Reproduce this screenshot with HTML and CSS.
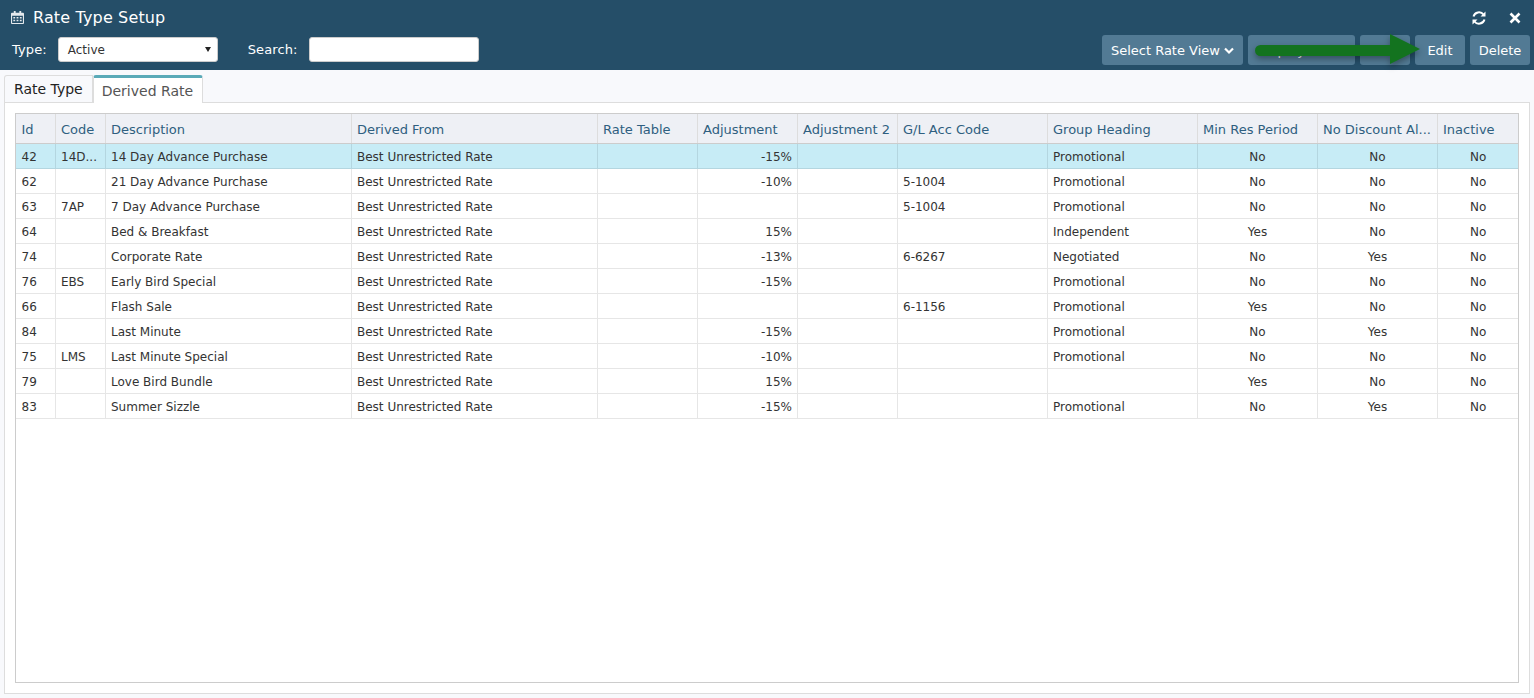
FILE: index.html
```html
<!DOCTYPE html>
<html lang="en">
  <head>
    <meta charset="UTF-8" />
    <title>Rate Type Setup</title>
    <link rel="stylesheet" href="styles.css">
  </head>
  <body>
    <div class="top-bar">
      <div class="title-row">
        <svg class="title-icon" viewBox="0 0 14 14" width="14" height="14">
          <path fill="#e4e9ed" d="M3 0h2v2h4V0h2v2h2a1 1 0 0 1 1 1v10a1 1 0 0 1-1 1H1a1 1 0 0 1-1-1V3a1 1 0 0 1 1-1h2zM1.2 5.2v7.6h11.6V5.2z"/>
          <path fill="#e4e9ed" d="M2.5 6.5h2v1.5h-2zM6 6.5h2v1.5H6zM9.5 6.5h2v1.5h-2zM2.5 9.5h2v1.5h-2zM6 9.5h2v1.5H6zM9.5 9.5h2v1.5h-2z"/>
        </svg>
        <h1 class="title">Rate Type Setup</h1>
        <div class="window-actions">
          <svg viewBox="0 0 16 16" width="16" height="16" fill="none" stroke="#fff" stroke-width="2">
            <path d="M2.5 6.5A5.7 5.7 0 0 1 12.5 4.5"/>
            <path d="M13.5 9.5A5.7 5.7 0 0 1 3.5 11.5"/>
            <path fill="#fff" stroke="none" d="M14.5 1.5v5h-5zM1.5 14.5v-5h5z"/>
          </svg>
          <svg viewBox="0 0 12 12" width="12" height="12" stroke="#fff" stroke-width="2.6">
            <path d="M1.5 1.5l9 9M10.5 1.5l-9 9"/>
          </svg>
        </div>
      </div>
      <div class="filter-row">
        <label class="filter-label">Type:</label>
        <div class="select-box">Active<span class="select-caret"></span></div>
        <label class="filter-label search-label">Search:</label>
        <input class="search-input" type="text" />
        <div class="btn-group">
          <button class="top-btn view-btn">Select Rate View
            <svg viewBox="0 0 10 8" width="10" height="8" fill="none" stroke="#fff" stroke-width="2.2"><path d="M1 1.5l4 4 4-4"/></svg>
          </button>
          <button class="top-btn order-btn">Display Order</button>
          <button class="top-btn add-btn">Add</button>
          <button class="top-btn edit-btn">Edit</button>
          <button class="top-btn delete-btn">Delete</button>
          <!-- Arrow pointing at the Edit button -->
          <svg class="arrow" viewBox="0 0 165 30" width="165" height="30">
            <path fill="#13731f" d="M5.5 11H135V0l30 15-30 15v-8H5.5a5.5 5.5 0 0 1 0-11z"/>
          </svg>
        </div>
      </div>
    </div>

    <div class="tabs">
      <div class="tab">Rate Type</div>
      <div class="tab active">Derived Rate</div>
    </div>

    <div class="panel">
      <div class="grid">
        <table class="rates">
          <colgroup>
            <col class="w-id" /><col class="w-code" /><col class="w-wide" /><col class="w-wide" />
            <col class="w-adj" /><col class="w-adj" /><col class="w-adj" /><col class="w-gl" /><col class="w-gl" />
            <col class="w-flag" /><col class="w-flag" /><col />
          </colgroup>
          <thead>
            <tr>
              <th>Id</th><th>Code</th><th>Description</th><th>Derived From</th><th>Rate Table</th>
              <th>Adjustment</th><th>Adjustment 2</th><th>G/L Acc Code</th><th>Group Heading</th>
              <th>Min Res Period</th><th>No Discount Al...</th><th>Inactive</th>
            </tr>
          </thead>
          <tbody id="rateRows"></tbody>
        </table>
      </div>
    </div>

    <script>
      const rows = [
        ["42", "14D...", "14 Day Advance Purchase", "-15%", "", "Promotional", "No", "No"],
        ["62", "", "21 Day Advance Purchase", "-10%", "5-1004", "Promotional", "No", "No"],
        ["63", "7AP", "7 Day Advance Purchase", "", "5-1004", "Promotional", "No", "No"],
        ["64", "", "Bed & Breakfast", "15%", "", "Independent", "Yes", "No"],
        ["74", "", "Corporate Rate", "-13%", "6-6267", "Negotiated", "No", "Yes"],
        ["76", "EBS", "Early Bird Special", "-15%", "", "Promotional", "No", "No"],
        ["66", "", "Flash Sale", "", "6-1156", "Promotional", "Yes", "No"],
        ["84", "", "Last Minute", "-15%", "", "Promotional", "No", "Yes"],
        ["75", "LMS", "Last Minute Special", "-10%", "", "Promotional", "No", "No"],
        ["79", "", "Love Bird Bundle", "15%", "", "", "Yes", "No"],
        ["83", "", "Summer Sizzle", "-15%", "", "Promotional", "No", "Yes"],
      ];
      const body = document.getElementById("rateRows");
      rows.forEach((r, i) => {
        const tr = document.createElement("tr");
        if (i === 0) tr.className = "selected";
        const cells = [
          [r[0]], [r[1]], [r[2]], ["Best Unrestricted Rate"], [""], [r[3], "num"], [""],
          [r[4]], [r[5]], [r[6], "mid"], [r[7], "mid"], ["No", "mid"],
        ];
        cells.forEach(([text, cls]) => {
          const td = document.createElement("td");
          td.textContent = text;
          if (cls) td.className = cls;
          tr.appendChild(td);
        });
        body.appendChild(tr);
      });
    </script>
  </body>
</html>
```

FILE: styles.css
```css
* {
  box-sizing: border-box;
}
body {
  margin: 0;
  height: 698px;
  overflow: hidden;
  background: #f8f9fc;
  font-family: "DejaVu Sans", Verdana, sans-serif;
  font-size: 12px;
  color: #333;
  display: flex;
  flex-direction: column;
}
.top-bar {
  height: 70px;
  background: #254e68;
  color: #fff;
  flex: none;
}
.title-row {
  height: 35px;
  padding: 0 13px 0 11px;
  display: flex;
  align-items: center;
}
.title-icon {
  width: 13px;
  height: 13px;
}
.title {
  margin: 0 0 0 9px;
  font-size: 16px;
  font-weight: normal;
  letter-spacing: 0.15px;
}
.window-actions {
  margin-left: auto;
  display: flex;
  align-items: center;
  gap: 22px;
}
.filter-row {
  height: 35px;
  padding: 0 4px 5px 12px;
  display: flex;
  align-items: center;
}
.filter-label {
  font-size: 13px;
  letter-spacing: 0.1px;
  margin-bottom: 2px;
}
.select-box {
  position: relative;
  margin: 0 0 2px 11px;
  width: 160px;
  height: 25px;
  line-height: 24px;
  padding-left: 9px;
  background: #fff;
  border: 1px solid #ccc;
  border-radius: 3px;
  color: #333;
}
.select-caret {
  position: absolute;
  right: 6px;
  top: 9px;
  border-left: 3px solid transparent;
  border-right: 3px solid transparent;
  border-top: 5px solid #222;
}
.search-label {
  margin-left: 30px;
}
.search-input {
  margin: 0 0 2px 11px;
  width: 170px;
  height: 25px;
  background: #fff;
  border: 1px solid #ccc;
  border-radius: 3px;
  outline: none;
}
.btn-group {
  position: relative;
  margin-left: auto;
  display: flex;
  gap: 5px;
}
.top-btn {
  height: 30px;
  padding: 0;
  font-family: inherit;
  font-size: 13px;
  color: #fff;
  background: #527a94;
  border: none;
  border-radius: 3px;
  white-space: nowrap;
  overflow: hidden;
}
.view-btn { width: 141px; }
.order-btn { width: 107px; }
.add-btn { width: 50px; }
.edit-btn { width: 50px; }
.delete-btn { width: 60px; }
.arrow {
  position: absolute;
  left: 153px;
  top: -1px;
  filter: drop-shadow(0 3px 3px rgba(0, 0, 0, 0.35));
}
.tabs {
  height: 32px;
  padding: 5px 0 0 4px;
  display: flex;
  align-items: flex-end;
  flex: none;
}
.tab {
  height: 27px;
  line-height: 26px;
  padding: 0 9px;
  font-size: 14px;
  color: #222;
  background: #f8f9fc;
  border: 1px solid #ddd;
  border-bottom: none;
  border-radius: 3px 0 0 0;
}
.tab.active {
  height: 28px;
  margin-bottom: -1px;
  padding: 0 9px 0 8px;
  line-height: 27px;
  color: #555;
  background: #fff;
  border-top: 3px solid #5aaab8;
  border-radius: 3px 3px 0 0;
  position: relative;
}
.panel {
  height: 592px;
  margin: 0 4px;
  padding: 10px;
  background: #fff;
  border: 1px solid #ddd;
}
.grid {
  height: 100%;
  border: 1px solid #ccc;
}
.rates {
  width: 100%;
  table-layout: fixed;
  border-collapse: collapse;
}
.w-id { width: 39px; }
.w-code { width: 50px; }
.w-wide { width: 246px; }
.w-adj { width: 100px; }
.w-gl { width: 150px; }
.w-flag { width: 120px; }
.rates th {
  height: 29px;
  padding: 2px 4.5px 0 5.5px;
  text-align: left;
  font-weight: normal;
  font-size: 13px;
  color: #2f5f80;
  background: #eef0f5;
  border-right: 1px solid #ddd;
  border-bottom: 1px solid #ccc;
  white-space: nowrap;
  overflow: hidden;
}
.rates td {
  height: 25px;
  padding: 2px 4.5px 0 5.5px;
  border-right: 1px solid #e6e6e6;
  border-bottom: 1px solid #e6e6e6;
  white-space: nowrap;
  overflow: hidden;
}
.rates th:last-child,
.rates td:last-child {
  border-right: none;
}
.rates td.num {
  text-align: right;
}
.rates td.mid {
  text-align: center;
}
.rates tr.selected td {
  background: #c7ecf6;
  border-color: #b4d6e0;
}
```
